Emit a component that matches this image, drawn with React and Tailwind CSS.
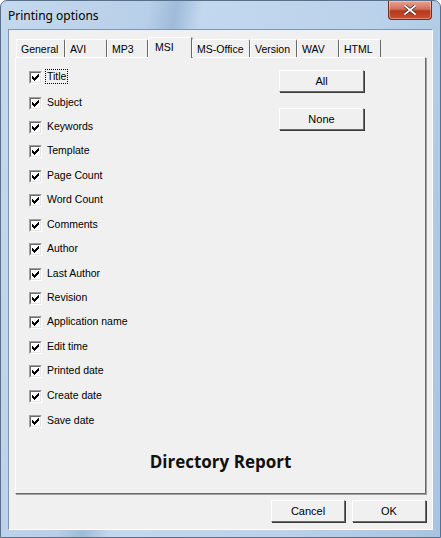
import { useState } from 'react';

const TABS = ['General', 'AVI', 'MP3', 'MSI', 'MS-Office', 'Version', 'WAV', 'HTML'];
// widths measured from the screenshot
const TAB_W = { General: 49, AVI: 42, MP3: 41, MSI: 44, 'MS-Office': 58, Version: 47, WAV: 42, HTML: 42 };

const FIELDS = [
  'Title', 'Subject', 'Keywords', 'Template', 'Page Count', 'Word Count', 'Comments', 'Author',
  'Last Author', 'Revision', 'Application name', 'Edit time', 'Printed date', 'Create date',
];

const ui = { fontFamily: '"Liberation Sans", Arial, sans-serif' };

function CheckBox({ checked }) {
  return (
    <span className="w-[13px] h-[13px] shrink-0 bg-white border border-t-[#a0a0a0] border-l-[#a0a0a0] border-b-white border-r-white flex">
      <span className="flex-1 border border-t-[#696969] border-l-[#696969] border-b-[#e3e3e3] border-r-[#e3e3e3] flex items-center justify-center">
        {checked && (
          <svg width="7" height="7" viewBox="0 0 7 7">
            <path d="M0 2h1v1h1v1h1V3h1V2h1V1h1V0h1v3H6v1H5v1H4v1H3v1H2V6H1V5H0z" fill="#000" />
          </svg>
        )}
      </span>
    </span>
  );
}

function Btn({ children, className = '' }) {
  return (
    <button
      className={`h-[22px] bg-[#f0f0f0] border border-t-white border-l-white border-b-[#696969] border-r-[#696969] shadow-[1px_1px_0_#3c3c3c] text-[11px] text-black flex items-center justify-center ${className}`}
      style={ui}
    >
      {children}
    </button>
  );
}

export default function App() {
  const [checked] = useState(() => FIELDS.concat('Save date').map(() => true));

  return (
    <div className="w-[441px] h-[538px] flex flex-col rounded-t-[7px] border border-[#5a6f8a] bg-[linear-gradient(100deg,#c4d9ee_0%,#b7cfe8_28%,#9fbbd9_33%,#c2d8ee_38%,#bad2ea_70%,#a9c4e2_100%)] overflow-hidden">
      {/* title bar */}
      <div className="h-[28px] flex items-start justify-between">
        <span className="pl-[7px] pt-[6px] text-[12px] text-black" style={{ fontFamily: '"Noto Sans", "Open Sans", sans-serif' }}>
          Printing options
        </span>
        <div className="mr-[8px] w-[44px] h-[19px] rounded-b-[4px] border border-t-0 border-[#7a2a1f] bg-[linear-gradient(180deg,#e8a393_0%,#d0705a_45%,#b8391c_55%,#c94f30_100%)] flex items-center justify-center shadow-[inset_0_0_0_1px_rgba(255,255,255,0.35)]">
          <svg width="12" height="10" viewBox="0 0 12 10">
            <path d="M1 1l10 8M11 1L1 9" stroke="#3b2a28" strokeWidth="3.2" strokeLinecap="square" />
            <path d="M1 1l10 8M11 1L1 9" stroke="#fff" strokeWidth="1.8" strokeLinecap="square" />
          </svg>
        </div>
      </div>

      {/* client area */}
      <div className="mx-[7px] mb-[7px] flex-1 bg-[#f0f0f0] border border-t-[#7f96b2] border-l-[#7f96b2] border-r-white border-b-white flex flex-col px-[6px] pt-[7px]" style={ui}>
        {/* tabs */}
        <div className="h-[20px] flex items-end relative z-10 pl-[1px]">
          {TABS.map((t) => {
            const sel = t === 'MSI';
            return (
              <div
                key={t}
                style={{ width: TAB_W[t] }}
                className={
                  sel
                    ? 'h-[21px] -mb-[1px] bg-[#f0f0f0] border border-b-0 border-t-white border-l-white border-r-[#696969] rounded-t-[2px] text-[10.5px] leading-[14px] whitespace-nowrap text-black pl-[6px] pt-[2px] shadow-[1px_0_0_#a0a0a0]'
                    : 'h-[18px] bg-[#f0f0f0] border border-b-0 border-t-white border-l-white border-r-[#696969] rounded-t-[2px] text-[10.5px] leading-[14px] whitespace-nowrap text-black pl-[4px] pt-[2px]'
                }
              >
                {t}
              </div>
            );
          })}
        </div>

        {/* tab panel */}
        <div className="h-[437px] border border-t-white border-l-white border-r-[#696969] border-b-[#696969] shadow-[1px_1px_0_#a0a0a0] flex flex-col">
          <div className="flex">
            <div className="flex flex-col pl-[13px] pt-[13px]">
              {FIELDS.map((f, i) => (
                <div key={f} className={`${i === 0 ? 'h-[25.5px]' : 'h-[24.45px]'} flex items-start gap-[4px]`}>
                  <CheckBox checked={checked[i]} />
                  <span
                    className={`text-[10.5px] leading-[13px] text-black px-[1px] -mt-[1px] ${i === 0 ? 'outline outline-1 outline-dotted outline-black' : 'outline outline-1 outline-transparent'}`}
                  >
                    {f}
                  </span>
                </div>
              ))}
              <div className="h-[24px] flex items-start gap-[4px] mt-[1px]">
                <CheckBox checked={checked[14]} />
                <span className="text-[10.5px] leading-[13px] text-black px-[1px] -mt-[1px]">Save date</span>
              </div>
            </div>
            <div className="ml-auto mr-[61px] pt-[12px] flex flex-col gap-[16px]">
              <Btn className="w-[85px]">All</Btn>
              <Btn className="w-[85px]">None</Btn>
            </div>
          </div>
          <div
            className="mt-[10px] text-center text-[17px] font-bold text-[#111]"
            style={{ fontFamily: '"Open Sans", "Noto Sans", sans-serif' }}
          >
            Directory Report
          </div>
        </div>

        {/* bottom buttons */}
        <div className="mt-[6px] flex justify-end gap-[7px]">
          <Btn className="w-[74px]">Cancel</Btn>
          <Btn className="w-[74px]">OK</Btn>
        </div>
      </div>
    </div>
  );
}
